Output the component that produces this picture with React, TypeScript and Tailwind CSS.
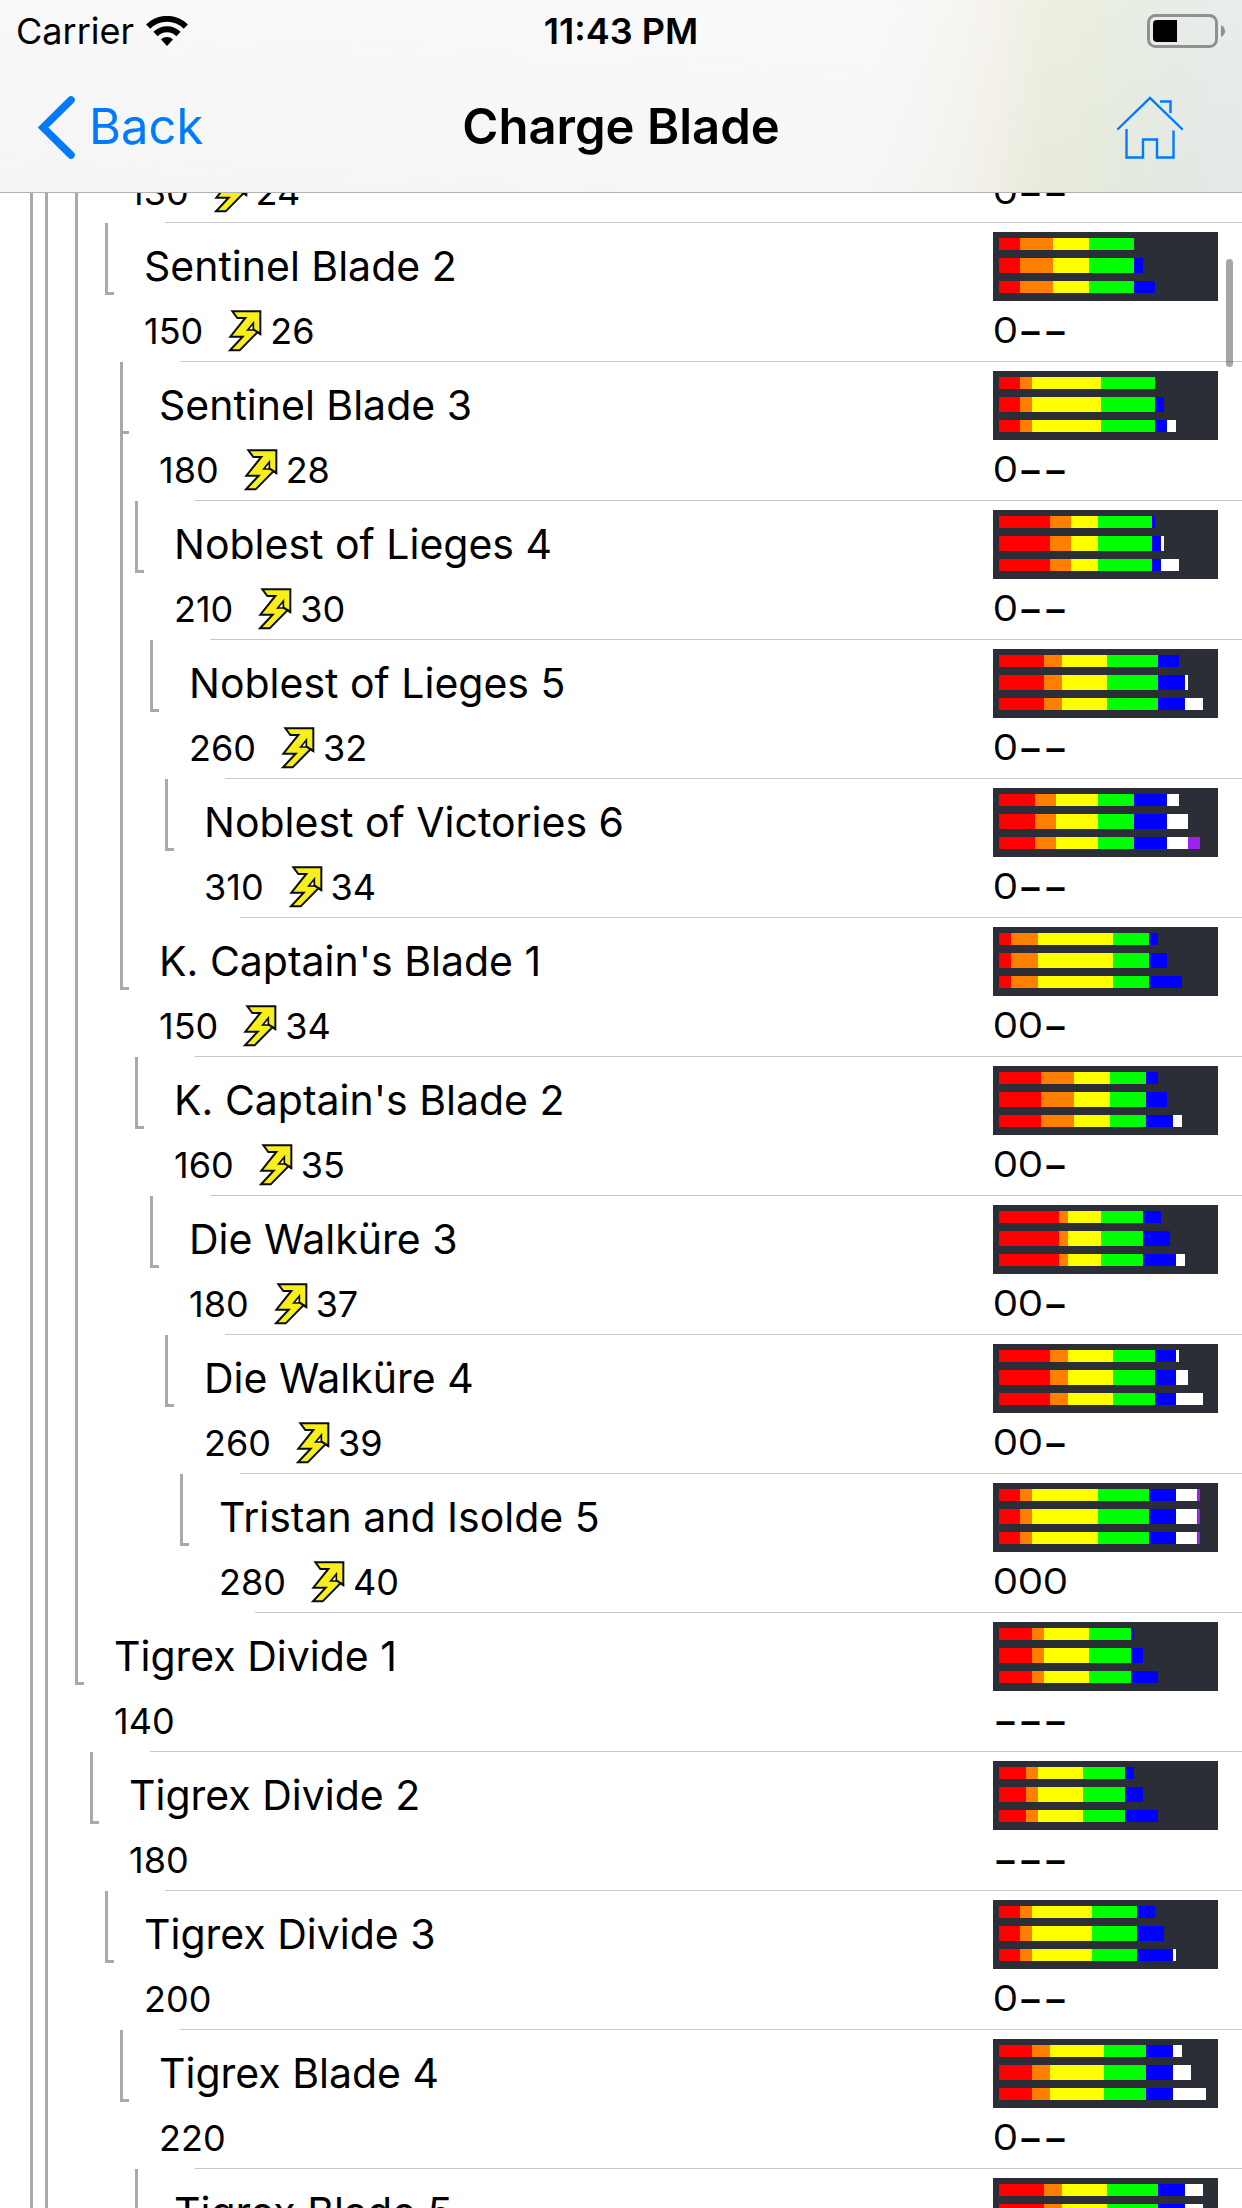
import React from "react";

type Row = {
  name?: string;
  attack: number;
  element?: number;
  slots: string;
  depth: number;
  guides: number[];
  continues?: boolean;
  /** red, orange, yellow, green segments shared by all three bars */
  base: number[];
  /** blue, white, purple segments, one list for each bar */
  tips: number[][];
};

const rows: Row[] = [
  { attack: 130, element: 24, slots: "O--", depth: 6, guides: [2, 3, 5], base: [7, 11, 12, 12], tips: [[], [], []] },
  { name: "Sentinel Blade 2", attack: 150, element: 26, slots: "O--", depth: 7, guides: [2, 3, 5], base: [7, 11, 12, 15], tips: [[], [3], [7]] },
  { name: "Sentinel Blade 3", attack: 180, element: 28, slots: "O--", depth: 8, guides: [2, 3, 5], continues: true, base: [7, 4, 23, 18], tips: [[], [3], [4, 3]] },
  { name: "Noblest of Lieges 4", attack: 210, element: 30, slots: "O--", depth: 9, guides: [2, 3, 5, 8], base: [17, 7, 9, 18], tips: [[1], [3, 1], [3, 6]] },
  { name: "Noblest of Lieges 5", attack: 260, element: 32, slots: "O--", depth: 10, guides: [2, 3, 5, 8], base: [15, 6, 15, 17], tips: [[7], [9, 1], [9, 6]] },
  { name: "Noblest of Victories 6", attack: 310, element: 34, slots: "O--", depth: 11, guides: [2, 3, 5, 8], base: [12, 7, 14, 12], tips: [[11, 4], [11, 7], [11, 7, 4]] },
  { name: "K. Captain's Blade 1", attack: 150, element: 34, slots: "OO-", depth: 8, guides: [2, 3, 5], base: [4, 9, 25, 12], tips: [[3], [6], [11]] },
  { name: "K. Captain's Blade 2", attack: 160, element: 35, slots: "OO-", depth: 9, guides: [2, 3, 5], base: [14, 11, 12, 12], tips: [[4], [7], [9, 3]] },
  { name: "Die Walküre 3", attack: 180, element: 37, slots: "OO-", depth: 10, guides: [2, 3, 5], base: [20, 3, 11, 14], tips: [[6], [9], [11, 3]] },
  { name: "Die Walküre 4", attack: 260, element: 39, slots: "OO-", depth: 11, guides: [2, 3, 5], base: [17, 6, 15, 14], tips: [[7, 1], [7, 4], [7, 9]] },
  { name: "Tristan and Isolde 5", attack: 280, element: 40, slots: "OOO", depth: 12, guides: [2, 3, 5], base: [7, 4, 22, 17], tips: [[9, 7, 1], [9, 7, 1], [9, 7, 1]] },
  { name: "Tigrex Divide 1", attack: 140, slots: "---", depth: 5, guides: [2, 3], base: [11, 4, 15, 14], tips: [[1], [4], [9]] },
  { name: "Tigrex Divide 2", attack: 180, slots: "---", depth: 6, guides: [2, 3], base: [9, 4, 15, 14], tips: [[3], [6], [11]] },
  { name: "Tigrex Divide 3", attack: 200, slots: "O--", depth: 7, guides: [2, 3], base: [7, 4, 20, 15], tips: [[6], [9], [12, 1]] },
  { name: "Tigrex Blade 4", attack: 220, slots: "O--", depth: 8, guides: [2, 3], base: [11, 6, 18, 14], tips: [[9, 3], [9, 6], [9, 11]] },
  { name: "Tigrex Blade 5", attack: 240, slots: "O--", depth: 9, guides: [2, 3], base: [15, 6, 15, 17], tips: [[9, 6], [9, 6], [9, 6]] },
];

const segmentColors = [
  "bg-[#ff0000]",
  "bg-[#ff8000]",
  "bg-[#ffff00]",
  "bg-[#00ff00]",
  "bg-[#0000ff]",
  "bg-white",
  "bg-[#a020f0]",
];

const SEGMENT_UNIT = 3;

function Sharpness({ base, tips }: { base: number[]; tips: number[][] }) {
  return (
    <div className="flex w-[225px] flex-col gap-2 bg-[#2b2e36] px-1.5 pt-1.5 pb-2">
      {tips.map((tip, i) => (
        <div key={i} className={i === 1 ? "flex h-[15px]" : "flex h-3"}>
          {[...base, ...tip].map((units, j) => (
            <div key={j} className={segmentColors[j]} style={{ width: units * SEGMENT_UNIT }} />
          ))}
        </div>
      ))}
    </div>
  );
}

function Slots({ value }: { value: string }) {
  return (
    <p className="flex h-11 text-4xl leading-[44px]">
      {value.split("").map((slot, i) =>
        slot === "O" ? (
          <span key={i} className="w-[25px] text-center font-[Roboto,sans-serif]">O</span>
        ) : (
          <span key={i} className="flex w-[25px] justify-center font-semibold">–</span>
        ),
      )}
    </p>
  );
}

function ThunderIcon() {
  return (
    <svg className="h-[42px] w-[35px]" viewBox="83 56 105 126" aria-label="Thunder" role="img">
      <path
        d="M99 60H183V128L175 122L121 177H92L130 136H93L138 80H114Z"
        fill="#f7ee1b"
        stroke="#0b0c10"
        strokeWidth="6"
      />
      <path d="M145 116L162 95V116Z" fill="#fff" stroke="#0b0c10" strokeWidth="5" />
      <path d="M162 114L184 129" stroke="#0b0c10" strokeWidth="6" />
    </svg>
  );
}

function Gutter({ depth, guides, continues }: Pick<Row, "depth" | "guides" | "continues">) {
  return (
    <div className="flex shrink-0" aria-hidden="true">
      {Array.from({ length: depth }, (_, i) => (
        <div key={i} className={guides.includes(i) ? "w-[15px] border-l-[3px] border-[#a9a9a9]" : "w-[15px]"} />
      ))}
      <div className={continues ? "w-[15px] border-l-[3px] border-[#a9a9a9]" : "w-[15px]"}>
        <div
          className={
            continues
              ? "h-[72px] w-1.5 border-b-[3px] border-[#a9a9a9]"
              : "h-[72px] w-[9px] border-b-[3px] border-l-[3px] border-[#a9a9a9]"
          }
        />
      </div>
    </div>
  );
}

function WeaponRow({ row }: { row: Row }) {
  return (
    <li className="flex shrink-0">
      <Gutter depth={row.depth} guides={row.guides} continues={row.continues} />
      <div className="min-w-0 flex-1">
        <div className="flex justify-between pr-6 pb-2 pl-6">
          <div className="pt-[18px]">
            {row.name ? (
              <h2 className="text-[41px] leading-[50px] whitespace-nowrap">{row.name}</h2>
            ) : (
              <div className="h-[50px]" />
            )}
            <p className="mt-[18px] flex h-11 items-center text-4xl leading-[44px]">
              <span>{row.attack}</span>
              {row.element !== undefined && (
                <span className="ml-6 flex items-center gap-2">
                  <ThunderIcon />
                  <span>{row.element}</span>
                </span>
              )}
            </p>
          </div>
          <div className="flex flex-col gap-2 pt-[9px]">
            <Sharpness base={row.base} tips={row.tips} />
            <Slots value={row.slots} />
          </div>
        </div>
        <div className="ml-[60px] h-px bg-[#c8c7cc]" />
      </div>
    </li>
  );
}

function StatusBar() {
  return (
    <div className="grid h-[62px] grid-cols-3 items-center px-4 text-4xl leading-[44px]">
      <div className="flex items-center gap-3">
        <span>Carrier</span>
        <svg className="h-[30px] w-[42px]" viewBox="0 0 42 30" aria-label="Wi-Fi" role="img">
          <path d="M21 30L15 23.500A8.500 8.500 0 0 1 27 23.500Z" />
          <path d="M9.500 18A16.300 16.300 0 0 1 32.500 18" fill="none" stroke="#000" strokeWidth="6" />
          <path d="M2.200 10.600A26.600 26.600 0 0 1 39.800 10.600" fill="none" stroke="#000" strokeWidth="6" />
        </svg>
      </div>
      <span className="text-center font-semibold">11:43 PM</span>
      <svg className="h-[34px] w-[79px] justify-self-end" viewBox="0 0 79 34" aria-label="Battery" role="img">
        <rect x="1.500" y="1.500" width="68" height="31" rx="7" fill="none" stroke="#8f9290" strokeWidth="3" />
        <path d="M10 6H30V28H10Q6 28 6 24V10Q6 6 10 6Z" />
        <path d="M74 11Q78 13 78 17T74 23Z" fill="#8f9290" />
      </svg>
    </div>
  );
}

function NavBar() {
  return (
    <nav className="grid h-[130px] grid-cols-[1fr_auto_1fr] items-center px-[38px] text-[49px] leading-[60px]">
      <button type="button" className="flex items-center gap-3.5 justify-self-start text-[#007aff]">
        <svg className="h-[63px] w-[37px]" viewBox="0 0 37 63" aria-hidden="true">
          <path d="M33 4L5 31.500L33 59" fill="none" stroke="currentColor" strokeWidth="7.500" strokeLinecap="round" />
        </svg>
        <span>Back</span>
      </button>
      <h1 className="font-semibold">Charge Blade</h1>
      <button type="button" aria-label="Home" className="justify-self-end pr-5 text-[#007aff]">
        <svg className="h-[64px] w-[68px]" viewBox="0 0 68 64" fill="none" stroke="currentColor" strokeWidth="2.400">
          <path d="M2 34L34 3L66 34" strokeLinecap="round" />
          <path d="M44 6.500H54.500V18" />
          <path d="M10.500 34V62.500H27V44.500H41V62.500H57.500V35.500" />
        </svg>
      </button>
    </nav>
  );
}

export default function App() {
  return (
    <div className="relative flex h-screen flex-col overflow-hidden bg-white font-[Inter,sans-serif] text-black">
      <header className="z-10 shrink-0 border-b border-[#b2b2b2] bg-[linear-gradient(to_bottom,rgba(255,255,255,0.1),rgba(0,0,0,0.012)),linear-gradient(92deg,#f8f8f8_0%,#f9f9f9_70%,#f7f5f2_76%,#f3f1e9_80%,#ecedde_84%,#e7eddf_89%,#e6ebe5_94%,#e8ebec_100%)]">
        <StatusBar />
        <NavBar />
      </header>
      <main className="min-h-0 flex-1">
        <ul className="-mt-[109px] flex flex-col">
          {rows.map((row, i) => (
            <WeaponRow key={i} row={row} />
          ))}
        </ul>
      </main>
      <div className="absolute top-[259px] right-[9px] h-[108px] w-[7px] rounded-full bg-black/35" aria-hidden="true" />
    </div>
  );
}
